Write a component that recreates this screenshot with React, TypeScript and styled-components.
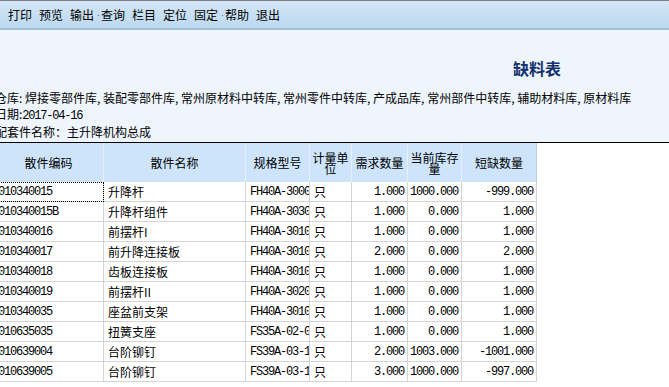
import styled, { createGlobalStyle } from "styled-components";

type Row = {
  code: string;
  name: string;
  spec: string;
  unit: string;
  need: string;
  stock: string;
  short: string;
};

const rows: Row[] = [
  { code: "010340015", name: "升降杆", spec: "FH40A-3000-00", unit: "只", need: "1.000", stock: "1000.000", short: "-999.000" },
  { code: "010340015B", name: "升降杆组件", spec: "FH40A-3030-00", unit: "只", need: "1.000", stock: "0.000", short: "1.000" },
  { code: "010340016", name: "前摆杆I", spec: "FH40A-3010-01", unit: "只", need: "1.000", stock: "0.000", short: "1.000" },
  { code: "010340017", name: "前升降连接板", spec: "FH40A-3010-02", unit: "只", need: "2.000", stock: "0.000", short: "2.000" },
  { code: "010340018", name: "齿板连接板", spec: "FH40A-3010-03", unit: "只", need: "1.000", stock: "0.000", short: "1.000" },
  { code: "010340019", name: "前摆杆II", spec: "FH40A-3020-01", unit: "只", need: "1.000", stock: "0.000", short: "1.000" },
  { code: "010340035", name: "座盆前支架", spec: "FH40A-3010-04", unit: "只", need: "1.000", stock: "0.000", short: "1.000" },
  { code: "010635035", name: "扭簧支座", spec: "FS35A-02-00-01", unit: "只", need: "1.000", stock: "0.000", short: "1.000" },
  { code: "010639004", name: "台阶铆钉", spec: "FS39A-03-1-01", unit: "只", need: "2.000", stock: "1003.000", short: "-1001.000" },
  { code: "010639005", name: "台阶铆钉", spec: "FS39A-03-1-02", unit: "只", need: "3.000", stock: "1000.000", short: "-997.000" },
];

const menu = [
  { label: "打印" },
  { label: "预览" },
  { label: "输出" },
  { label: "查询", dot: true },
  { label: "栏目" },
  { label: "定位" },
  { label: "固定" },
  { label: "帮助", dot: true },
  { label: "退出" },
];

const headers = ["散件编码", "散件名称", "规格型号", "计量单位", "需求数量", "当前库存量", "短缺数量"];

const COLS = "110px 142px 64px 42px 56px 54px 75px";

const GlobalStyle = createGlobalStyle`
  html, body {
    margin: 0;
    padding: 0;
    background: #ffffff;
    overflow: hidden;
  }
  body {
    font-family: "Noto Sans CJK SC", "Liberation Sans", sans-serif;
    font-size: 12px;
    color: #000;
  }
`;

const Toolbar = styled.div`
  height: 27px;
  border-top: 1px solid #7d7d7d;
  border-bottom: 2px solid #a3c0da;
  background: linear-gradient(#d3e7f7, #bcd8ef);
  display: flex;
  align-items: center;
  gap: 7px;
  padding-left: 8px;
`;

const MenuItem = styled.span`
  position: relative;
  width: 24px;
  font-size: 12px;
  line-height: 14px;
  white-space: nowrap;
  color: #000;
`;

const Dot = styled.span`
  position: absolute;
  left: -3px;
  top: 7px;
  width: 1px;
  height: 1px;
  background: #6b6b6b;
`;

const Sheet = styled.div`
  margin-left: -6px;
`;

const Info = styled.div`
  background: #eef5fc;
  padding: 28px 0 2px 1px;
  border-bottom: 1px solid #000;
`;

const Title = styled.div`
  padding-left: 518px;
  font-size: 16px;
  line-height: 20px;
  font-weight: bold;
  color: #12306e;
  margin-bottom: 12px;
`;

const InfoLine = styled.div`
  font-size: 12px;
  line-height: 16px;
  white-space: nowrap;
`;

const Mono = styled.span`
  font-family: "Liberation Mono", monospace;
  font-size: 12px;
  letter-spacing: -1.2px;
`;

const Grid = styled.div`
  background: #ffffff;
`;

const HeaderRow = styled.div`
  display: grid;
  grid-template-columns: ${COLS};
  height: 39px;
`;

const HeadCell = styled.div<{ $last?: boolean }>`
  background: #cde4fa;
  border-right: 1px solid ${(p) => (p.$last ? "#b7cde0" : "#e6f1fc")};
  display: flex;
  align-items: center;
  justify-content: center;
  text-align: center;
  font-size: 12px;
  line-height: 11px;
  padding: 0 2px;
  box-sizing: border-box;
`;

const BodyRow = styled.div`
  display: grid;
  grid-template-columns: ${COLS};
  height: 20px;
`;

const Cell = styled.div<{ $num?: boolean; $mono?: boolean; $focus?: boolean }>`
  box-sizing: border-box;
  border-right: 1px solid #d4d4d4;
  border-bottom: 1px solid #d4d4d4;
  padding: 0 ${(p) => (p.$num ? "3px" : "2px")} 0 ${(p) => (p.$num ? "0" : "4px")};
  display: flex;
  align-items: center;
  justify-content: ${(p) => (p.$num ? "flex-end" : "flex-start")};
  overflow: hidden;
  white-space: nowrap;
  line-height: 14px;
  font-family: ${(p) => (p.$mono ? '"Liberation Mono", monospace' : '"Noto Sans CJK SC", sans-serif')};
  font-size: 12px;
  letter-spacing: ${(p) => (p.$mono ? "-1.2px" : "0")};
  outline: ${(p) => (p.$focus ? "1px dotted #000" : "none")};
  outline-offset: -1px;
`;

export default function App() {
  return (
    <>
      <GlobalStyle />
      <Toolbar>
        {menu.map((m) => (
          <MenuItem key={m.label}>
            {m.dot && <Dot />}
            {m.label}
          </MenuItem>
        ))}
      </Toolbar>
      <Sheet>
        <Info>
          <Title>缺料表</Title>
          <InfoLine>仓库: 焊接零部件库, 装配零部件库, 常州原材料中转库, 常州零件中转库, 产成品库, 常州部件中转库, 辅助材料库, 原材料库</InfoLine>
          <InfoLine>
            日期:<Mono>2017-04-16</Mono>
          </InfoLine>
          <InfoLine>配套件名称：主升降机构总成</InfoLine>
        </Info>
        <Grid>
          <HeaderRow>
            {headers.map((h, i) => (
              <HeadCell key={h} $last={i === headers.length - 1}>
                {h}
              </HeadCell>
            ))}
          </HeaderRow>
          {rows.map((r, i) => (
            <BodyRow key={r.code}>
              <Cell $mono $focus={i === 0}>{r.code}</Cell>
              <Cell>{r.name}</Cell>
              <Cell $mono>{r.spec}</Cell>
              <Cell>{r.unit}</Cell>
              <Cell $mono $num>{r.need}</Cell>
              <Cell $mono $num>{r.stock}</Cell>
              <Cell $mono $num>{r.short}</Cell>
            </BodyRow>
          ))}
        </Grid>
      </Sheet>
    </>
  );
}
